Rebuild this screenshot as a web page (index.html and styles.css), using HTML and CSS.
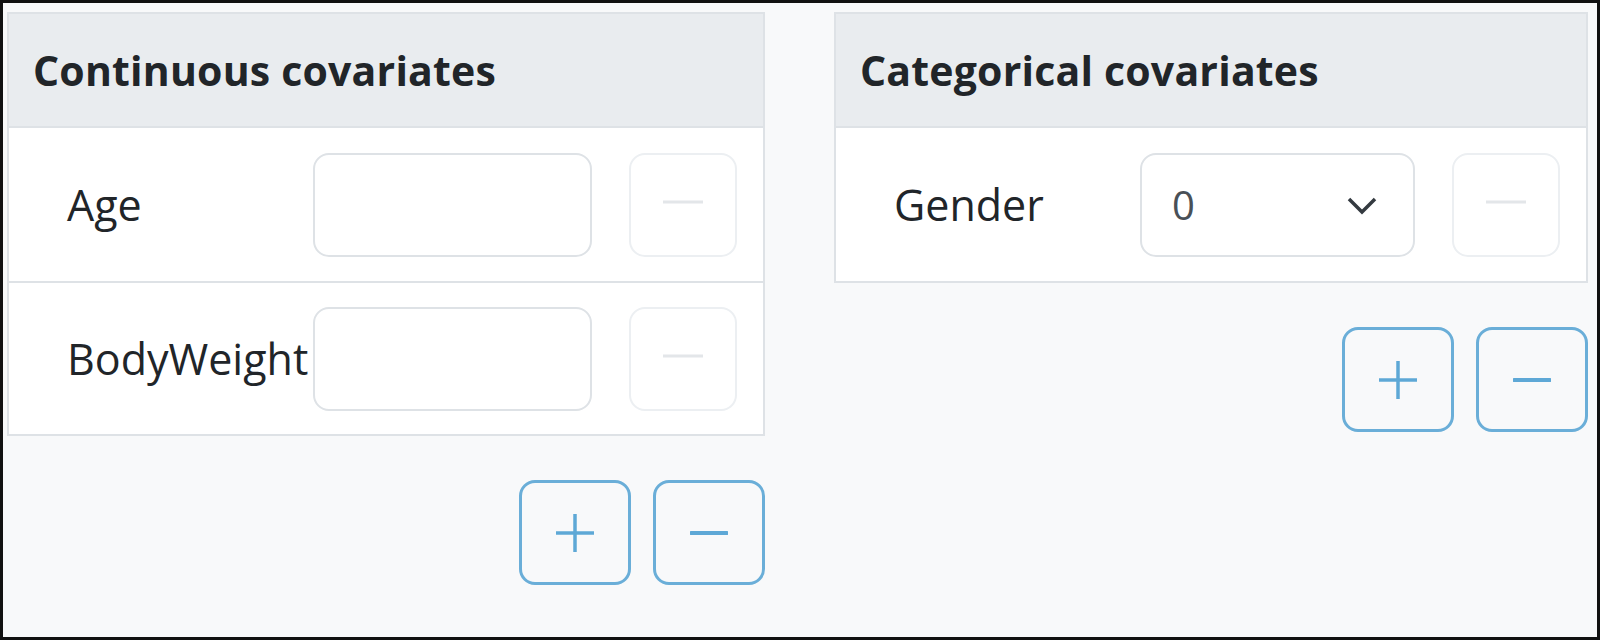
FILE: index.html
```html
<!DOCTYPE html>
<html lang="en">
<head>
    <meta charset="UTF-8">
    <meta name="viewport" content="width=device-width, initial-scale=1.0">
    <title>Covariates</title>
    <link rel="stylesheet" href="styles.css">
</head>
<body>
    <div class="frame">
        <div class="column">
            <section class="card">
                <div class="card-header">Continuous covariates</div>
                <div class="cov-row">
                    <label for="age">Age</label>
                    <input type="text" id="age" class="field">
                    <button class="btn-remove" disabled>
                        <svg viewBox="0 0 40 4" width="40" height="4"><line x1="0" y1="2" x2="40" y2="2"/></svg>
                    </button>
                </div>
                <div class="cov-row">
                    <label for="bodyWeight">BodyWeight</label>
                    <input type="text" id="bodyWeight" class="field">
                    <button class="btn-remove" disabled>
                        <svg viewBox="0 0 40 4" width="40" height="4"><line x1="0" y1="2" x2="40" y2="2"/></svg>
                    </button>
                </div>
            </section>
            <div class="actions">
                <button class="btn-outline" title="Add">
                    <svg viewBox="0 0 38 38" width="38" height="38"><line x1="0" y1="19" x2="38" y2="19"/><line x1="19" y1="0" x2="19" y2="38"/></svg>
                </button>
                <button class="btn-outline" title="Remove">
                    <svg viewBox="0 0 38 6" width="38" height="6"><line class="thick" x1="1" y1="3" x2="37" y2="3"/></svg>
                </button>
            </div>
        </div>

        <div class="column">
            <section class="card">
                <div class="card-header">Categorical covariates</div>
                <div class="cov-row">
                    <label for="gender">Gender</label>
                    <div class="select-wrap">
                        <select id="gender" class="field select">
                            <option>0</option>
                            <option>1</option>
                        </select>
                        <svg class="chevron" viewBox="0 0 30 18" width="30" height="18"><polyline points="2,2 15,15 28,2"/></svg>
                    </div>
                    <button class="btn-remove" disabled>
                        <svg viewBox="0 0 40 4" width="40" height="4"><line x1="0" y1="2" x2="40" y2="2"/></svg>
                    </button>
                </div>
            </section>
            <div class="actions">
                <button class="btn-outline" title="Add">
                    <svg viewBox="0 0 38 38" width="38" height="38"><line x1="0" y1="19" x2="38" y2="19"/><line x1="19" y1="0" x2="19" y2="38"/></svg>
                </button>
                <button class="btn-outline" title="Remove">
                    <svg viewBox="0 0 38 6" width="38" height="6"><line class="thick" x1="1" y1="3" x2="37" y2="3"/></svg>
                </button>
            </div>
        </div>
    </div>
</body>
</html>
```

FILE: styles.css
```css
body {
    margin: 0;
    font-family: "Open Sans", "Noto Sans", sans-serif;
    color: #212529;
}

.frame {
    box-sizing: border-box;
    width: 1600px;
    height: 640px;
    border: 3px solid #111;
    background-color: #f8f9fa;
    padding: 9px 0 0 4px;
    display: grid;
    grid-template-columns: 758px 754px;
    column-gap: 69px;
    align-items: start;
}

.card {
    background-color: #fff;
    border: 2px solid #dee2e6;
}

.card-header {
    box-sizing: border-box;
    height: 114px;
    padding: 0 24px;
    display: flex;
    align-items: center;
    background-color: #e9ecef;
    border-bottom: 2px solid #dee2e6;
    font-size: 41px;
    font-weight: 700;
    letter-spacing: 0.2px;
}

.cov-row {
    box-sizing: border-box;
    height: 153px;
    padding: 0 26px 0 58px;
    display: flex;
    align-items: center;
}

.cov-row + .cov-row {
    border-top: 2px solid #dee2e6;
}

.cov-row label {
    width: 246px;
    flex: none;
    font-size: 43px;
    white-space: nowrap;
}

.field {
    box-sizing: border-box;
    flex: 1;
    width: 0;
    min-width: 0;
    height: 104px;
    border: 2px solid #dee2e6;
    border-radius: 16px;
    background-color: #fff;
    font-family: inherit;
    font-size: 40px;
    padding: 0 30px;
    outline: none;
}

.select-wrap {
    flex: 1;
    min-width: 0;
    position: relative;
    display: flex;
}

.select {
    width: 100%;
    appearance: none;
    -webkit-appearance: none;
    color: #495057;
}

.chevron {
    position: absolute;
    right: 38px;
    top: 44px;
    fill: none;
    stroke: #343a40;
    stroke-width: 3.5;
}

.btn-remove {
    box-sizing: border-box;
    width: 108px;
    height: 104px;
    margin-left: 37px;
    flex: none;
    border: 2px solid #eceff2;
    border-radius: 16px;
    background-color: #fff;
    display: flex;
    align-items: center;
    justify-content: center;
}

.btn-remove svg {
    margin-bottom: 6px;
    stroke: #e3e6e9;
    stroke-width: 3;
}

.actions {
    margin-top: 44px;
    display: flex;
    justify-content: flex-end;
    gap: 22px;
}

.btn-outline {
    box-sizing: border-box;
    width: 112px;
    height: 105px;
    border: 3px solid #6aaed8;
    border-radius: 16px;
    background-color: transparent;
    display: flex;
    align-items: center;
    justify-content: center;
    cursor: pointer;
}

.btn-outline svg {
    stroke: #5ea8d6;
    stroke-width: 3.5;
}

.btn-outline svg .thick {
    stroke-width: 4;
    stroke-linecap: round;
}
```
